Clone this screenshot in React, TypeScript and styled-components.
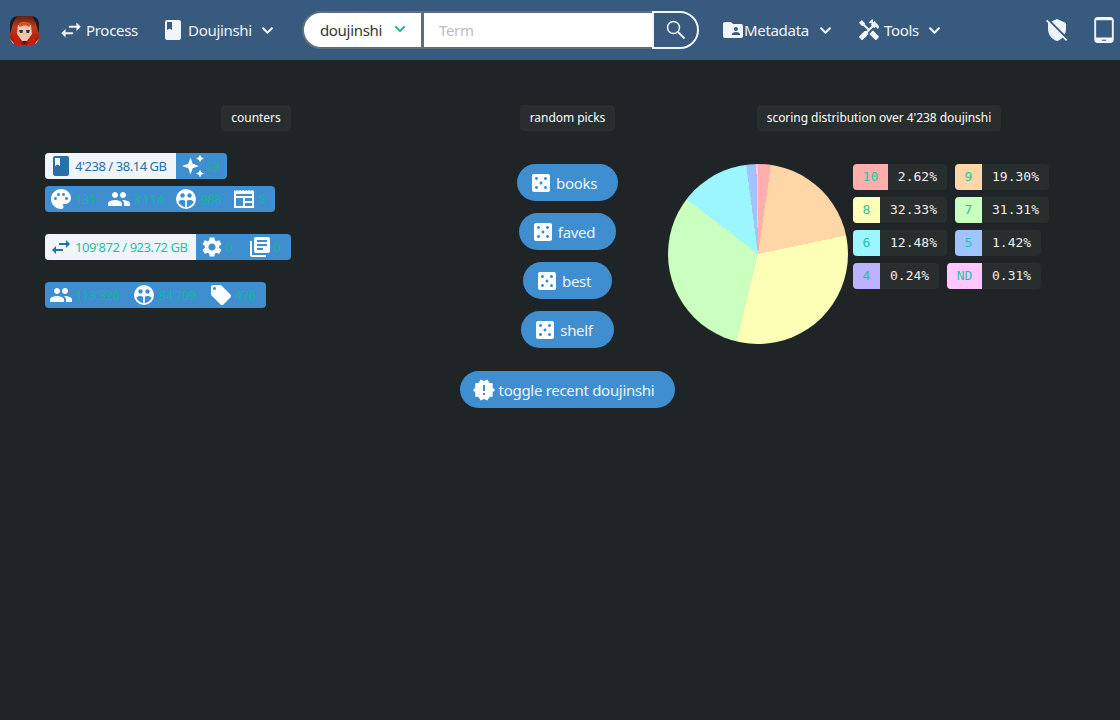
import styled, { createGlobalStyle } from 'styled-components';
import { FaChevronDown } from 'react-icons/fa';
import {
  MdBook,
  MdCasino,
  MdFolderShared,
  MdHandyman,
  MdLibraryBooks,
  MdLocalOffer,
  MdNewReleases,
  MdOutlineTabletAndroid,
  MdPalette,
  MdPeople,
  MdRemoveModerator,
  MdSettings,
  MdSwapHoriz,
} from 'react-icons/md';

const UI_FONT = `"Noto Sans", "Liberation Sans", sans-serif`;

// share is the printed label, end is where the slice stops on the pie
const PIE_SLICES = [
  { key: '10', share: 2.62, end: 2.3, color: '#ffadad' },
  { key: '9', share: 19.3, end: 21.7, color: '#ffd6a5' },
  { key: '8', share: 32.33, end: 53.8, color: '#fdffb6' },
  { key: '7', share: 31.31, end: 85.4, color: '#caffbf' },
  { key: '6', share: 12.48, end: 97.9, color: '#9bf6ff' },
  { key: '5', share: 1.42, end: 99.47, color: '#a0c4ff' },
  { key: '4', share: 0.24, end: 99.7, color: '#bdb2ff' },
  { key: 'ND', share: 0.31, end: 100, color: '#ffc6ff' },
];

// hard stops, one per slice, running clockwise from the top
const pieStops = () => {
  let from = 0;
  return PIE_SLICES.map((slice) => {
    const stop = `${slice.color} ${from}% ${slice.end}%`;
    from = slice.end;
    return stop;
  }).join(', ');
};

const GlobalStyle = createGlobalStyle`
  html, body {
    margin: 0;
    min-height: 100%;
    background: #1f2526;
    font-family: ${UI_FONT};
  }
  * { box-sizing: border-box; }
`;

// --- Navbar ---

const Navbar = styled.nav`
  display: flex;
  align-items: center;
  height: 60px;
  background: #385a7e;
  color: #eff5fb;
`;

const LogoItem = styled.a`
  display: flex;
  align-items: center;
  padding: 0 10px;
`;

const NavItem = styled.a<{ $gap?: number }>`
  display: flex;
  align-items: center;
  gap: ${({ $gap }) => $gap ?? 5}px;
  padding: 0 12px;
  font-size: 15px;
  letter-spacing: -0.3px;
  white-space: nowrap;
`;

const Chevron = styled(FaChevronDown)<{ $space?: number }>`
  width: 13px;
  height: 13px;
  margin-left: ${({ $space }) => $space ?? 4}px;
`;

const SearchForm = styled.form`
  display: flex;
  height: 38px;
  margin: 0 12px 0 16px;
`;

const SelectBox = styled.div`
  display: flex;
  align-items: center;
  justify-content: space-between;
  width: 121px;
  padding: 0 15px 0 16px;
  background: #fff;
  border: 2px solid #5d7077;
  border-radius: 19px 0 0 19px;
  color: #363636;
  font-size: 15px;
  letter-spacing: -0.3px;

  svg {
    width: 12px;
    height: 12px;
    margin-bottom: 3px;
    color: #12b894;
  }
`;

const TermInput = styled.div`
  display: flex;
  align-items: center;
  width: 229px;
  padding: 0 15px;
  background: #fff;
  border: 2px solid #5d7077;
  border-width: 2px 0 2px 1px;
  color: #bdbdbd;
  font-size: 15px;
  letter-spacing: -0.3px;
`;

const SearchButton = styled.button`
  display: flex;
  align-items: center;
  width: 47px;
  padding: 0 0 0 12px;
  background: transparent;
  border: 2px solid #eff5fb;
  border-radius: 0 19px 19px 0;
  color: #eff5fb;
`;

const NavEnd = styled.div`
  display: flex;
  align-items: center;
  gap: 22px;
  margin-left: auto;
  padding-right: 3px;
`;

// --- Page ---

const Columns = styled.main`
  display: grid;
  grid-template-columns: 422px 201px 422px;
  padding: 45px 0 0 45px;
  color: #fff;
`;

const Column = styled.section<{ $center?: boolean }>`
  display: flex;
  flex-direction: column;
  align-items: ${({ $center }) => ($center ? 'center' : 'flex-start')};
`;

const Heading = styled.span`
  align-self: center;
  height: 26px;
  margin-bottom: 22px;
  padding: 0 10px;
  background: #282d2e;
  border-radius: 4px;
  font-size: 12px;
  line-height: 26px;
  letter-spacing: -0.05px;
  white-space: nowrap;
`;

const StatRow = styled.div<{ $gapAfter?: number }>`
  display: flex;
  height: 26px;
  margin-bottom: ${({ $gapAfter }) => $gapAfter ?? 7}px;
  overflow: hidden;
  background: #3e8ed0;
  border-radius: 4px;
`;

const Segment = styled.div<{ $light?: boolean; $gap?: number; $endPad?: number }>`
  display: flex;
  align-items: center;
  gap: ${({ $gap }) => $gap ?? 13}px;
  padding: 0 ${({ $endPad }) => $endPad ?? 9}px 0 4px;
  background: ${({ $light }) => ($light ? '#eff5fb' : 'transparent')};
  color: ${({ $light }) => ($light ? '#296fa8' : '#fff')};
`;

const Stat = styled.span`
  display: flex;
  align-items: center;
  gap: 2px;
  white-space: nowrap;

  svg {
    flex: none;
    width: 24px;
    height: 24px;
  }
`;

const StatValue = styled.span<{ $tone?: 'info' | 'teal' | 'muted' }>`
  font-size: 13px;
  letter-spacing: -0.45px;
  color: ${({ $tone }) =>
    $tone === 'info' ? '#296fa8' : $tone === 'teal' ? '#1fc39f' : '#14b894'};
`;

const PickList = styled.div`
  display: flex;
  flex-direction: column;
  align-items: center;
  margin-top: 11px;
`;

const PickButton = styled.button<{ $gapAfter?: number }>`
  display: flex;
  align-items: center;
  gap: 3px;
  height: 37px;
  margin-bottom: ${({ $gapAfter }) => $gapAfter ?? 12}px;
  padding: 0 21px 0 12px;
  background: #3e8ed0;
  border: none;
  border-radius: 19px;
  color: #eff5fb;
  font-family: ${UI_FONT};
  font-size: 15px;
  letter-spacing: -0.3px;
  white-space: nowrap;

  svg {
    flex: none;
    width: 24px;
    height: 24px;
    color: #fff;
  }
`;

const Distribution = styled.div`
  display: flex;
  align-items: flex-start;
  gap: 5px;
  margin-top: 11px;
`;

const Pie = styled.div`
  flex: none;
  width: 180px;
  height: 180px;
  border-radius: 50%;
  background: conic-gradient(${pieStops()});
`;

const Legend = styled.div`
  display: flex;
  flex-direction: column;
  gap: 7px;
`;

const LegendRow = styled.div`
  display: flex;
  gap: 8px;
`;

const LegendTag = styled.div`
  display: flex;
  height: 26px;
  overflow: hidden;
  background: #282d2e;
  border-radius: 4px;
  font-family: "DejaVu Sans Mono", "Liberation Mono", monospace;
  font-size: 13px;
  line-height: 26px;
  white-space: nowrap;
`;

const LegendKey = styled.span<{ $color: string }>`
  padding: 0 9.6px;
  background: ${({ $color }) => $color};
  color: #1fc4a4;
`;

const LegendValue = styled.span`
  padding: 0 10px;
  color: #eee;
`;

// --- Drawings ---

const Logo = () => (
  <svg width="29" height="29" viewBox="0 0 29 29">
    <defs>
      <clipPath id="logo-clip">
        <rect width="29" height="29" rx="8" />
      </clipPath>
      <linearGradient id="logo-hair" x1="0" y1="0" x2="0" y2="1">
        <stop offset="0" stopColor="#5e2214" />
        <stop offset="0.4" stopColor="#c23a1a" />
        <stop offset="1" stopColor="#8f160a" />
      </linearGradient>
      <filter id="logo-soft" x="-10%" y="-10%" width="120%" height="120%">
        <feGaussianBlur stdDeviation="0.6" />
      </filter>
    </defs>
    <g clipPath="url(#logo-clip)">
      <g filter="url(#logo-soft)">
        <rect width="29" height="29" fill="url(#logo-hair)" />
        <path d="M0 0h7L3 7 1 15 0 17zM29 0h-7l4 7 2 8 1 2z" fill="#141c26" />
        <path d="M0 23l6 6H0zM29 23l-6 6h6z" fill="#e2bc98" />
        <path d="M8 9c3-2 10-2 13 0l1 9-5 7h-5l-5-7z" fill="#f0c6ac" />
        <path d="M8 8c4-3 9-3 13 0l-2 3c-2-2-6-2-9 0z" fill="#d8501f" />
        <path d="M9 14h4l-.5 3H10zM16 14h4l-1 3h-2.500z" fill="#33305c" />
        <path d="M3 18l6 4 3 7H4zM26 18l-6 4-3 7h8z" fill="#c81e0c" />
        <path d="M12.500 25h4l-2 4z" fill="#2b0d08" />
      </g>
    </g>
  </svg>
);

const SearchIcon = () => (
  <svg width="20" height="20" viewBox="0 0 20 20" fill="none" stroke="currentColor">
    <circle cx="7.500" cy="7.500" r="6" strokeWidth="1.500" />
    <path d="M12 12l6.500 6.500" strokeWidth="1.800" />
  </svg>
);

const SparkleIcon = () => (
  <svg viewBox="-2 0 24 24" fill="currentColor">
    <path d="M8.500 3.500l2.200 6.300 6.300 2.200-6.300 2.200-2.200 6.300-2.200-6.300L0 12l6.300-2.200z" />
    <path d="M18 .5l1.200 2.800L22 4.500l-2.800 1.200L18 8.500l-1.200-2.800L14 4.500l2.800-1.200z" />
    <path d="M18 15.500l1.200 2.800 2.800 1.200-2.800 1.200-1.200 2.800-1.200-2.800-2.800-1.200 2.800-1.200z" />
  </svg>
);

const GroupDiscIcon = () => (
  <svg viewBox="0 0 24 24">
    <circle cx="12" cy="12" r="10" fill="#fff" />
    <g fill="#3e8ed0">
      <circle cx="8.500" cy="8.500" r="2.200" />
      <circle cx="15.500" cy="8.500" r="2.200" />
      <path d="M4.300 14.800c1.200-2 5-2.200 6.900-1.100v6.500c-3-.4-5.700-2.600-6.900-5.400z" />
      <path d="M19.700 14.800c-1.200-2-5-2.200-6.900-1.100v6.500c3-.4 5.700-2.600 6.900-5.400z" />
    </g>
  </svg>
);

const NewsIcon = () => (
  <svg viewBox="0 0 24 24" fill="#fff">
    <path
      fillRule="evenodd"
      d="M2 3l1.500 1L5 3l1.500 1L8 3l1.500 1L11 3l1.500 1L14 3l1.500 1L17 3l1.500 1L20 3l1.500 1L22 3v18H2zm2 4v2h16V7zm0 4v8h7v-8zm9 0v3h7v-3zm0 5v3h7v-3z"
    />
  </svg>
);

const LEGEND_ROWS = [
  [0, 1],
  [2, 3],
  [4, 5],
  [6, 7],
];

const formatShare = (share: number) => `${share.toFixed(2)}%`;

const PICKS = ['books', 'faved', 'best', 'shelf'];

export default function App() {
  return (
    <>
      <GlobalStyle />
      <Navbar>
        <LogoItem>
          <Logo />
        </LogoItem>
        <NavItem>
          <MdSwapHoriz size={26} style={{ margin: '0 -3px' }} />
          Process
        </NavItem>
        <NavItem $gap={7} style={{ marginLeft: 3 }}>
          <MdBook size={24} style={{ margin: '0 -4px' }} />
          Doujinshi
          <Chevron $space={2} />
        </NavItem>
        <SearchForm>
          <SelectBox>
            doujinshi
            <FaChevronDown />
          </SelectBox>
          <TermInput>Term</TermInput>
          <SearchButton type="button">
            <SearchIcon />
          </SearchButton>
        </SearchForm>
        <NavItem $gap={1}>
          <MdFolderShared size={24} style={{ margin: '0 -2px' }} />
          Metadata
          <Chevron $space={9} />
        </NavItem>
        <NavItem style={{ marginLeft: 3 }}>
          <MdHandyman size={24} style={{ margin: '0 -2px' }} />
          Tools
          <Chevron />
        </NavItem>
        <NavEnd>
          <MdRemoveModerator size={24} />
          <MdOutlineTabletAndroid size={26} />
        </NavEnd>
      </Navbar>

      <Columns>
        <Column>
          <Heading>counters</Heading>
          <StatRow>
            <Segment $light>
              <Stat>
                <MdBook />
                <StatValue $tone="info">4'238 / 38.14 GB</StatValue>
              </Stat>
            </Segment>
            <Segment $endPad={7}>
              <Stat>
                <SparkleIcon />
                <StatValue>13</StatValue>
              </Stat>
            </Segment>
          </StatRow>
          <StatRow $gapAfter={22}>
            <Segment $gap={11} $endPad={10}>
              <Stat>
                <MdPalette />
                <StatValue>131</StatValue>
              </Stat>
              <Stat>
                <MdPeople />
                <StatValue>3'114</StatValue>
              </Stat>
              <Stat>
                <GroupDiscIcon />
                <StatValue>988</StatValue>
              </Stat>
              <Stat>
                <NewsIcon />
                <StatValue>5</StatValue>
              </Stat>
            </Segment>
          </StatRow>
          <StatRow $gapAfter={22}>
            <Segment $light $endPad={8}>
              <Stat>
                <MdSwapHoriz />
                <StatValue $tone="teal">109'872 / 923.72 GB</StatValue>
              </Stat>
            </Segment>
            <Segment $gap={15} $endPad={10}>
              <Stat>
                <MdSettings />
                <StatValue>0</StatValue>
              </Stat>
              <Stat>
                <MdLibraryBooks />
                <StatValue>0</StatValue>
              </Stat>
            </Segment>
          </StatRow>
          <StatRow>
            <Segment $endPad={10}>
              <Stat>
                <MdPeople />
                <StatValue>113'326</StatValue>
              </Stat>
              <Stat>
                <GroupDiscIcon />
                <StatValue>84'709</StatValue>
              </Stat>
              <Stat>
                <MdLocalOffer />
                <StatValue>476</StatValue>
              </Stat>
            </Segment>
          </StatRow>
        </Column>

        <Column $center>
          <Heading>random picks</Heading>
          <PickList>
            {PICKS.map((pick, i) => (
              <PickButton key={pick} $gapAfter={i === PICKS.length - 1 ? 23 : 12}>
                <MdCasino />
                {pick}
              </PickButton>
            ))}
            <PickButton>
              <MdNewReleases />
              toggle recent doujinshi
            </PickButton>
          </PickList>
        </Column>

        <Column>
          <Heading>scoring distribution over 4'238 doujinshi</Heading>
          <Distribution>
            <Pie />
            <Legend>
              {LEGEND_ROWS.map((row) => (
                <LegendRow key={row[0]}>
                  {row.map((index) => {
                    const slice = PIE_SLICES[index];
                    return (
                      <LegendTag key={slice.key}>
                        <LegendKey $color={slice.color}>{slice.key}</LegendKey>
                        <LegendValue>{formatShare(slice.share)}</LegendValue>
                      </LegendTag>
                    );
                  })}
                </LegendRow>
              ))}
            </Legend>
          </Distribution>
        </Column>
      </Columns>
    </>
  );
}
